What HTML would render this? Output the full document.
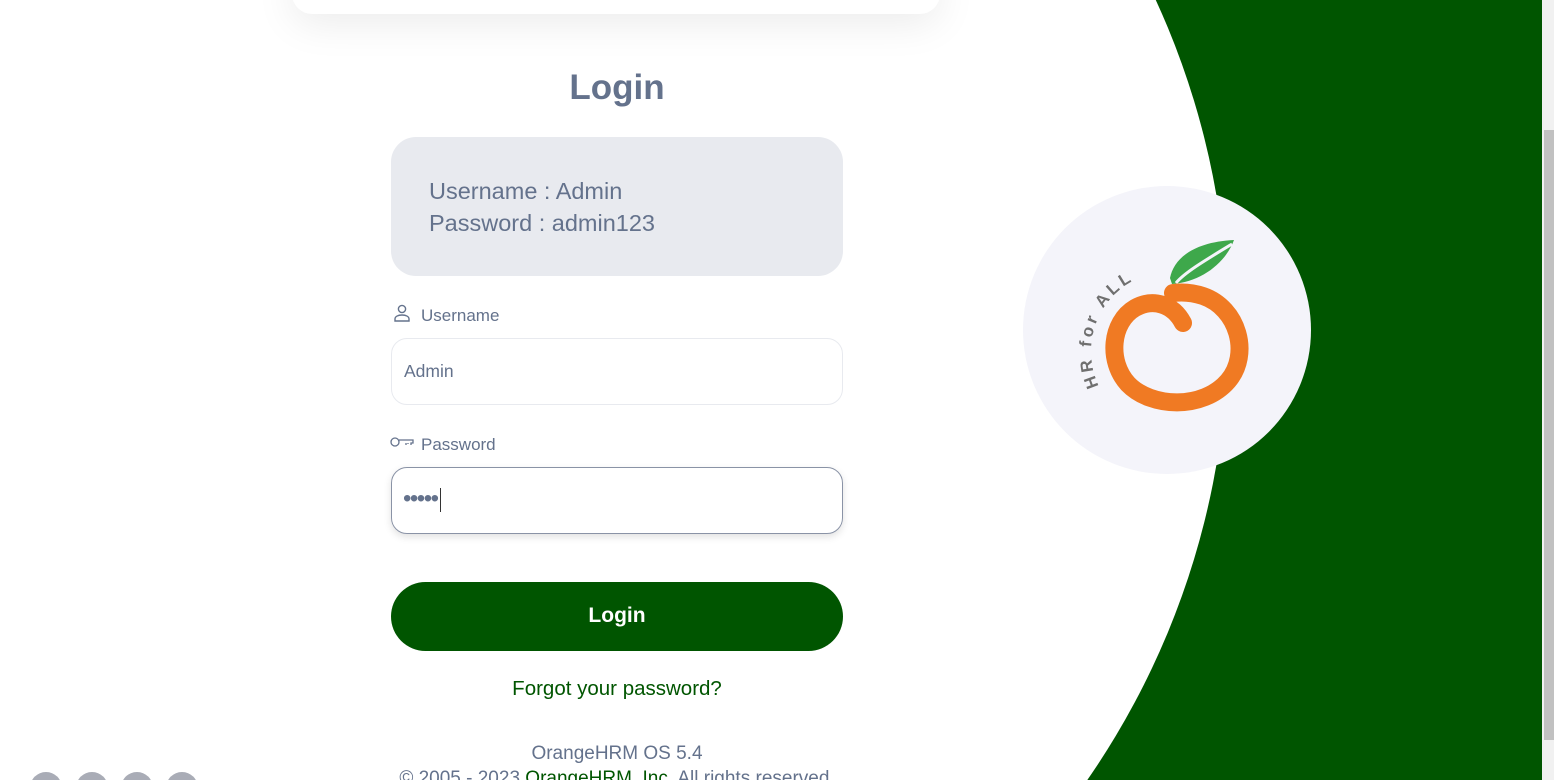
<!DOCTYPE html>
<html style="overflow:hidden;height:780px"><head><style>
html,body{overflow:hidden}
body{margin:0;width:1554px;height:780px;overflow:hidden;background:#fff;font-family:"Liberation Sans",sans-serif;position:relative}
.green{position:absolute;left:0;top:0;width:1542px;height:780px;background:#005500;overflow:hidden}
.white{position:absolute;width:1580px;height:1580px;border-radius:50%;background:#fff;left:-352px;top:-460px}
.card{position:absolute;left:292px;top:-40px;width:648px;height:54px;background:#fff;border-radius:20px;box-shadow:0 10px 40px rgba(0,0,0,.08)}
.sb{position:absolute;left:1542px;top:0;width:12px;height:780px;background:#f1f1f1}
.thumb{position:absolute;left:1544px;top:130px;width:10px;height:610px;background:#c1c1c1}
h1{position:absolute;top:68px;left:391px;width:452px;text-align:center;margin:0;font-size:35px;color:#64728c;font-weight:bold}
.cred{position:absolute;left:391px;top:137px;width:452px;height:139px;background:#e8eaef;border-radius:25px;color:#64728c;font-size:23.5px;box-sizing:border-box;padding:38px 38px;line-height:32px}
.lbl{position:absolute;left:392px;font-size:17px;color:#64728c}
.inp{position:absolute;left:391px;width:452px;height:67px;box-sizing:border-box;border:1px solid #e8eaef;border-radius:16px;font-size:17.5px;color:#64728c;padding:22px 12px}
.btn{position:absolute;left:391px;top:582px;width:452px;height:69px;background:#005500;border-radius:35px;color:#fff;font-size:21px;font-weight:bold;text-align:center;line-height:68px}
.fp{position:absolute;top:677px;left:391px;width:452px;text-align:center;color:#005500;font-size:20.5px}
.ft{position:absolute;left:341px;width:552px;text-align:center;color:#64728c;font-size:19px;white-space:nowrap}
.socw{position:absolute;left:0;top:772px;width:220px;height:8px;overflow:hidden}
.soc{position:absolute;top:0;width:32px;height:32px;border-radius:50%;background:#a9acb6}
</style></head><body>
<div class="green"><div class="white"></div></div>
<div class="sb"></div><div class="thumb"></div>
<div class="card"></div>
<h1>Login</h1>
<div class="cred">Username : Admin<br>Password : admin123</div>
<svg style="position:absolute;left:393px;top:304px" width="18" height="18" viewBox="0 0 18 18" fill="none" stroke="#64728c" stroke-width="1.4"><circle cx="9" cy="5" r="3.6"/><path d="M2 17v-2c0-2.5 3-4 7-4s7 1.5 7 4v2z"/></svg>
<div class="lbl" style="top:306px;left:421px">Username</div>
<div class="inp" style="top:338px">Admin</div>
<svg style="position:absolute;left:390px;top:435px" width="24" height="14" viewBox="0 0 24 14" fill="none" stroke="#64728c" stroke-width="1.3"><circle cx="5" cy="7" r="4"/><path d="M9 5h14v3h-2v2M16 8v2M18 8v1"/></svg>
<div class="lbl" style="top:435px;left:421px">Password</div>
<div class="inp" style="top:467px;border-color:#8a93a6;box-shadow:0 3px 8px rgba(0,0,0,.12);font-size:24px;padding:17px 11px;letter-spacing:-1.5px">•••••<span style="display:inline-block;width:1px;height:24px;background:#333;vertical-align:middle;margin-left:2px"></span></div>
<div class="btn">Login</div>
<div class="fp">Forgot your password?</div>
<div class="ft" style="top:743px">OrangeHRM OS 5.4</div>
<div class="ft" style="top:768px">© 2005 - 2023 <span style="color:#005500">OrangeHRM, Inc</span>. All rights reserved.</div>
<div class="socw"><div class="soc" style="left:30px"></div><div class="soc" style="left:76px"></div><div class="soc" style="left:121px"></div><div class="soc" style="left:166px"></div></div>
<div style="position:absolute;left:1023px;top:186px;width:288px;height:288px;border-radius:50%;background:#f4f4fa"></div>
<svg style="position:absolute;left:1023px;top:186px" width="288" height="288" viewBox="0 0 288 288">
<defs><path id="arc" d="M76 200 A 80 80 0 0 1 118 91"/></defs>
<path d="M147 92c4-20 24-36 64-38-8 22-32 42-62 44z" fill="#3ea84b"/>
<path d="M153 97c8-10 28-22 56-39" stroke="#f4f4fa" stroke-width="3" fill="none"/>
<path d="M160 137C150 118 130 112 112 122C88 136 84 175 105 198C128 222 180 224 205 195C228 168 215 122 180 110C168 106 158 106 150 107" stroke="#f07a23" stroke-width="18" fill="none" stroke-linecap="round"/>
<text font-family="Liberation Sans" font-weight="bold" font-size="17" fill="#6f6f6f" letter-spacing="3.5"><textPath href="#arc">HR for ALL</textPath></text>
</svg>
</body></html>
